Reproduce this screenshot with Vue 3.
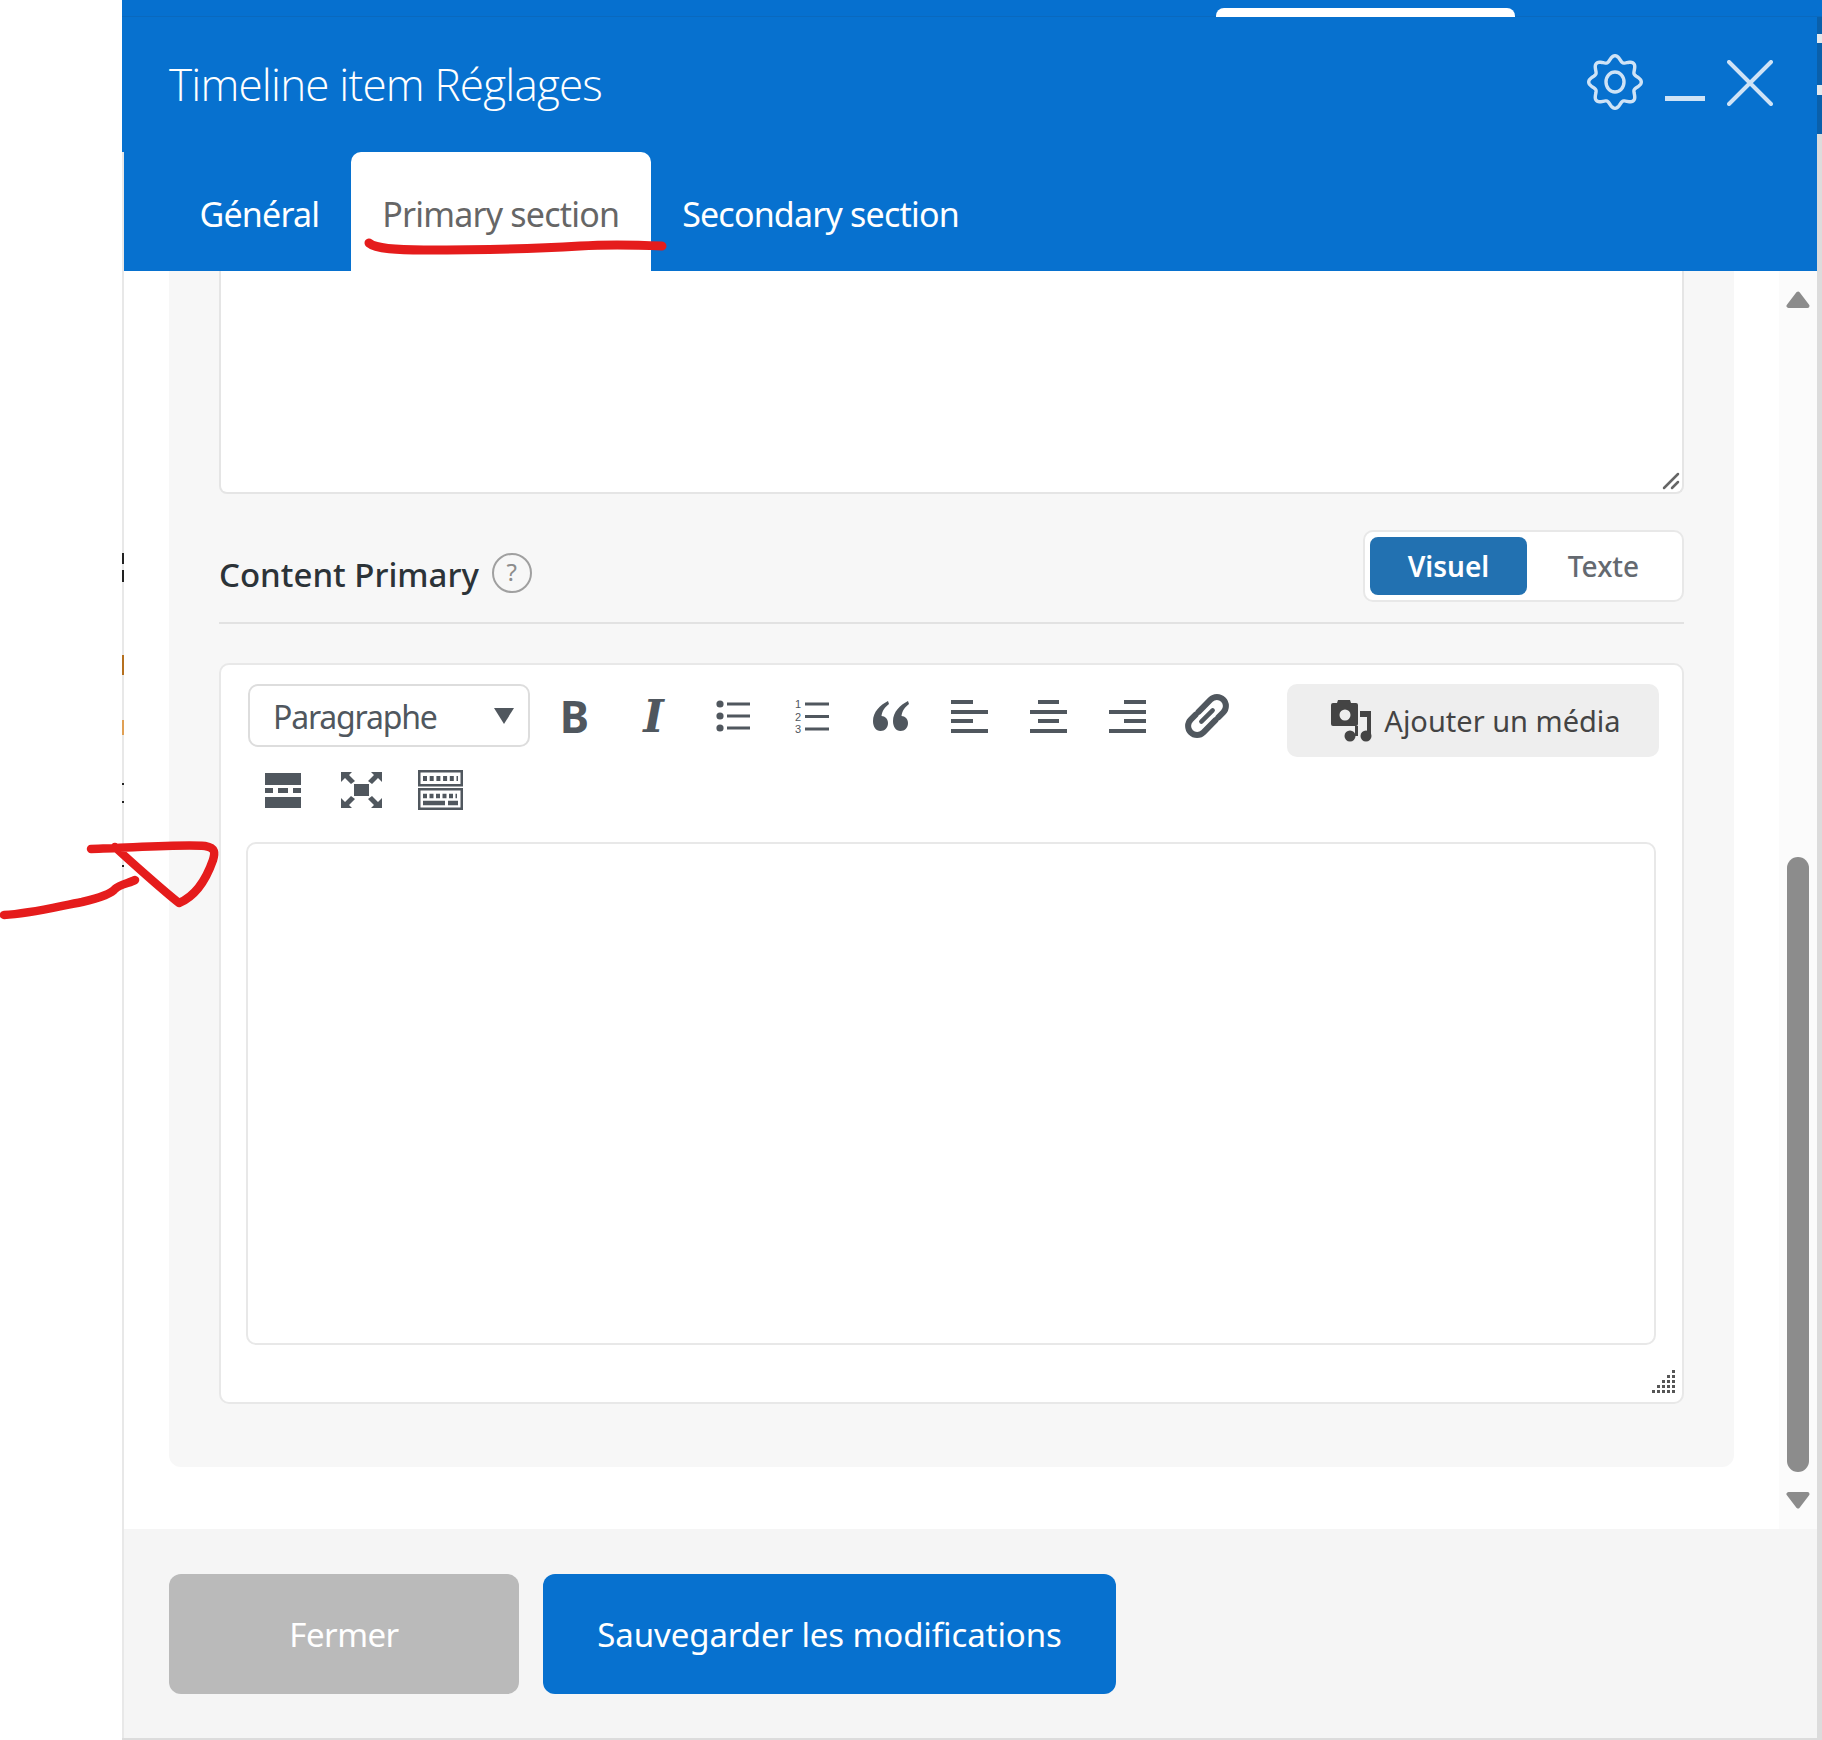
<script setup>
import { computed } from 'vue';

// wavy outline of the settings gear, 8 lobes
const gearPath = computed(() => {
    const pts = [];
    for (let i = 0; i < 160; i++) {
        const a = (i / 160) * Math.PI * 2 - Math.PI / 2;
        const r = 23.5 + 2.8 * Math.cos(8 * (a + Math.PI / 2));
        pts.push(`${(28 + r * Math.cos(a)).toFixed(2)} ${(28 + r * Math.sin(a)).toFixed(2)}`);
    }
    return 'M' + pts.join('L') + 'Z';
});

const resizeDots = [];
for (let row = 0; row < 5; row++) {
    for (let col = 4 - row; col < 5; col++) {
        resizeDots.push({ x: col * 5, y: row * 5 });
    }
}

const edgeMarks = [
    { left: 122, width: 2, top: 553, height: 11, color: '#222' },
    { left: 122, width: 2, top: 570, height: 12, color: '#222' },
    { left: 122, width: 2, top: 655, height: 20, color: '#b5701f' },
    { left: 122, width: 2, top: 720, height: 15, color: '#e0a055' },
    { left: 122, width: 2, top: 783, height: 2, color: '#222' },
    { left: 122, width: 2, top: 801, height: 2, color: '#222' },
    { left: 122, width: 2, top: 865, height: 2, color: '#222' },
    { left: 1817, width: 5, top: 17, height: 117, color: '#0a60ab' },
    { left: 1817, width: 5, top: 34, height: 9, color: '#e4e8ec' },
    { left: 1817, width: 5, top: 85, height: 10, color: '#e4e8ec' },
    { left: 1817, width: 5, top: 134, height: 1606, color: '#dcdcdc' },
];
</script>

<template>
    <div class="page">
        <div class="top-strip">
            <div class="behind-tab"></div>
        </div>
        <div class="modal">
            <header class="modal-head">
                <div class="title-row">
                    <h1>Timeline item Réglages</h1>
                    <div class="head-icons">
                        <svg class="gear" width="56" height="56" viewBox="0 0 56 56" fill="none" stroke="#cfe3f6" stroke-width="3.4">
                            <path :d="gearPath" />
                            <ellipse cx="28" cy="28" rx="9" ry="10" />
                        </svg>
                        <span class="minus"></span>
                        <svg class="close" width="46" height="46" viewBox="0 0 46 46" fill="none" stroke="#cfe3f6" stroke-width="4" stroke-linecap="round">
                            <path d="M2 2L44 44M44 2L2 44" />
                        </svg>
                    </div>
                </div>
                <nav class="tabs">
                    <a class="tab">Général</a>
                    <a class="tab active">Primary section</a>
                    <a class="tab">Secondary section</a>
                </nav>
            </header>

            <div class="modal-body">
                <div class="scroll-area">
                    <section class="panel">
                        <div class="old-textarea">
                            <svg class="corner-grip" width="18" height="18" viewBox="0 0 18 18" fill="none" stroke="#666" stroke-width="2.500" stroke-linecap="round">
                                <path d="M2 16L16 2M10 16L16 10" />
                            </svg>
                        </div>

                        <div class="field-head">
                            <div class="field-label">
                                <span class="label-text">Content Primary</span>
                                <span class="help">?</span>
                            </div>
                            <div class="mode-switch">
                                <button class="mode on">Visuel</button>
                                <button class="mode">Texte</button>
                            </div>
                        </div>

                        <div class="editor">
                            <div class="toolbar">
                                <div class="tool-rows">
                                    <div class="tool-row">
                                        <div class="format-select">
                                            <span>Paragraphe</span>
                                            <i class="caret"></i>
                                        </div>
                                        <button class="tool glyph-b">B</button>
                                        <button class="tool glyph-i">I</button>
                                        <button class="tool">
                                            <svg width="34" height="34" viewBox="0 0 34 34" fill="#50575e">
                                                <circle cx="4" cy="5" r="3.600" /><circle cx="4" cy="17" r="3.600" /><circle cx="4" cy="29" r="3.600" />
                                                <rect x="11" y="3.500" width="23" height="3" /><rect x="11" y="15.500" width="23" height="3" /><rect x="11" y="27.500" width="23" height="3" />
                                            </svg>
                                        </button>
                                        <button class="tool">
                                            <svg width="34" height="39" viewBox="0 0 34 39" fill="#50575e">
                                                <text x="0" y="11" class="num">1</text><text x="0" y="23.500" class="num">2</text><text x="0" y="36" class="num">3</text>
                                                <rect x="10" y="5.500" width="24" height="3" /><rect x="10" y="18" width="24" height="3" /><rect x="10" y="30.500" width="24" height="3" />
                                            </svg>
                                        </button>
                                        <button class="tool">
                                            <svg width="38" height="30" viewBox="0 0 38 30" fill="#50575e">
                                                <path d="M16 0C8 4 1 11 1 20c0 6 3 10 7.500 10S16 26.500 16 22c0-4-3-7-6.500-7C10 10 13 6 17 3z" />
                                                <path d="M36 0c-8 4-15 11-15 20 0 6 3 10 7.500 10S36 26.500 36 22c0-4-3-7-6.500-7C30 10 33 6 37 3z" />
                                            </svg>
                                        </button>
                                        <button class="tool">
                                            <svg width="37" height="34" viewBox="0 0 37 34" fill="#50575e">
                                                <rect x="0" y="1" width="22" height="4" /><rect x="0" y="11" width="37" height="4" /><rect x="0" y="20" width="22" height="4" /><rect x="0" y="30" width="37" height="4" />
                                            </svg>
                                        </button>
                                        <button class="tool">
                                            <svg width="37" height="34" viewBox="0 0 37 34" fill="#50575e">
                                                <rect x="8" y="1" width="21" height="4" /><rect x="0" y="11" width="37" height="4" /><rect x="8" y="20" width="21" height="4" /><rect x="0" y="30" width="37" height="4" />
                                            </svg>
                                        </button>
                                        <button class="tool">
                                            <svg width="37" height="34" viewBox="0 0 37 34" fill="#50575e">
                                                <rect x="15" y="1" width="22" height="4" /><rect x="0" y="11" width="37" height="4" /><rect x="15" y="20" width="22" height="4" /><rect x="0" y="30" width="37" height="4" />
                                            </svg>
                                        </button>
                                        <button class="tool">
                                            <svg width="46" height="46" viewBox="0 0 46 46" fill="none" stroke="#50575e" stroke-width="6" stroke-linecap="round">
                                                <g transform="rotate(-45 23 23)">
                                                    <path d="M20 14H37a9 9 0 0 1 0 18H30" />
                                                    <path d="M26 32H9a9 9 0 0 1 0-18H16" />
                                                    <path d="M15 23H31" stroke-width="4.500" />
                                                </g>
                                            </svg>
                                        </button>
                                    </div>
                                    <div class="tool-row second">
                                        <button class="tool">
                                            <svg width="36" height="35" viewBox="0 0 36 35" fill="#50575e">
                                                <rect x="0" y="0" width="36" height="12" />
                                                <rect x="0" y="15" width="8" height="5" /><rect x="13" y="15" width="10" height="5" /><rect x="28" y="15" width="8" height="5" />
                                                <rect x="0" y="24" width="36" height="11" />
                                            </svg>
                                        </button>
                                        <button class="tool">
                                            <svg width="41" height="36" viewBox="0 0 41 36" fill="#50575e">
                                                <rect x="13" y="12" width="15" height="12" />
                                                <path d="M0 0H11L8 3L14 9L10 12L4 6L0 10Z" />
                                                <path d="M41 0H30L33 3L27 9L31 12L37 6L41 10Z" />
                                                <path d="M0 36H11L8 33L14 27L10 24L4 30L0 26Z" />
                                                <path d="M41 36H30L33 33L27 27L31 24L37 30L41 26Z" />
                                            </svg>
                                        </button>
                                        <button class="tool">
                                            <svg width="45" height="40" viewBox="0 0 45 40" fill="none" stroke="#50575e" stroke-width="2.500">
                                                <rect x="1.250" y="1.250" width="42.500" height="14" />
                                                <rect x="1.250" y="19.250" width="42.500" height="19.500" />
                                                <path d="M5 8.500H40" stroke-width="5" stroke-dasharray="4 2.700" />
                                                <path d="M5 26H39" stroke-width="4.500" stroke-dasharray="4 2.500" />
                                                <path d="M5 33H27M30 33H40" stroke-width="4.500" />
                                            </svg>
                                        </button>
                                    </div>
                                </div>
                                <button class="media-btn">
                                    <svg width="42" height="42" viewBox="0 0 42 42" fill="#444">
                                        <path fill-rule="evenodd" d="M2 3H6L7 0H19L20 3H25Q27 3 27 5V24Q27 26 25 26H2Q0 26 0 24V5Q0 3 2 3ZM14 9.500a5.500 5.500 0 1 0 0 11a5.500 5.500 0 0 0 0-11Z" />
                                        <path d="M29 11H40V36H36V17H29Z" />
                                        <circle cx="35" cy="36" r="5.500" />
                                        <circle cx="19" cy="36" r="5.500" />
                                        <rect x="24" y="26" width="3" height="10" />
                                    </svg>
                                    <span>Ajouter un média</span>
                                </button>
                            </div>
                            <div class="edit-area"></div>
                            <div class="editor-foot">
                                <svg width="25" height="25" viewBox="0 0 25 25" fill="#555">
                                    <rect v-for="(d, i) in resizeDots" :key="i" :x="d.x" :y="d.y" width="3" height="3" />
                                </svg>
                            </div>
                        </div>
                    </section>
                </div>

                <aside class="scrollbar">
                    <svg class="arrow" width="24" height="17" viewBox="0 0 24 17" fill="#8c8c8c" stroke="#8c8c8c" stroke-width="4" stroke-linejoin="round">
                        <path d="M12 2.500L2.500 15H21.500Z" />
                    </svg>
                    <div class="track"><div class="thumb"></div></div>
                    <svg class="arrow" width="24" height="17" viewBox="0 0 24 17" fill="#8c8c8c" stroke="#8c8c8c" stroke-width="4" stroke-linejoin="round">
                        <path d="M12 14.500L2.500 2H21.500Z" />
                    </svg>
                </aside>
            </div>

            <footer class="modal-foot">
                <button class="btn grey">Fermer</button>
                <button class="btn blue">Sauvegarder les modifications</button>
            </footer>
        </div>

        <!-- bits of the page underneath, peeking out at the modal edges -->
        <span v-for="m in edgeMarks" :key="m.top" class="edge-mark" :style="{ left: m.left + 'px', width: m.width + 'px', top: m.top + 'px', height: m.height + 'px', background: m.color }"></span>

        <!-- hand drawn red marks on top of the screenshot -->
        <svg class="scribble" width="1822" height="1740" viewBox="0 0 1822 1740" fill="none" stroke="#e51c1c" stroke-width="8.500" stroke-linecap="round" stroke-linejoin="round">
            <path d="M369 243C376 249 398 250 424 250C480 250 530 249 580 246C610 244 640 245 662 246" stroke-width="9" />
            <path d="M4 915C30 914 60 906 82 902C100 898 112 893 115 889C120 884 130 883 135 880" />
            <path d="M91 849C130 848 180 844 205 846C216 848 215 853 213 860C206 880 196 896 179 903C165 892 130 861 115 847" />
        </svg>
    </div>
</template>

<style scoped>
.page{
    position: relative;
    width: 1822px;
    height: 1740px;
    overflow: hidden;
    background: #fff;
    font-family: "Noto Sans", sans-serif;
}
.top-strip{
    height: 17px;
    margin-left: 122px;
    background: #0670cf;
    border-bottom: 1px solid #0a69be;
    box-sizing: border-box;
    padding-top: 8px;
    padding-left: 1094px;
}
.behind-tab{
    width: 299px;
    height: 9px;
    background: #fff;
    border-radius: 8px 8px 0 0;
}
.modal{
    margin-left: 122px;
    width: 1695px;
    height: 1723px;
    display: flex;
    flex-direction: column;
    border-bottom: 2px solid #dcdcdc;
    box-sizing: border-box;
}
.modal-head{
    background: #0771cf;
    height: 254px;
    display: flex;
    flex-direction: column;
    flex: none;
}
.title-row{
    height: 135px;
    flex: none;
    display: flex;
    justify-content: space-between;
    padding: 0 44px 0 47px;
}
h1{
    margin: 0;
    padding-top: 37px;
    font-family: "Open Sans", sans-serif;
    font-size: 44px;
    line-height: 60px;
    letter-spacing: -0.8px;
    font-weight: 300;
    color: #fff;
}
.head-icons{
    display: flex;
    align-items: flex-start;
}
.gear{
    margin-top: 37px;
}
.minus{
    width: 40px;
    height: 5px;
    margin: 79px 22px 0 22px;
    background: #cfe3f6;
}
.close{
    margin-top: 43px;
}
.tabs{
    display: flex;
    padding-left: 44px;
    flex: 1;
    border-left: 2px solid #e8e8e8;
}
.tab{
    display: block;
    padding: 37px 31.5px 0;
    font-size: 34px;
    line-height: 50px;
    letter-spacing: -0.8px;
    color: #fff;
    border-radius: 10px 10px 0 0;
}
.tab.active{
    background: #fff;
    color: #666;
}
.modal-body{
    flex: 1;
    display: flex;
    min-height: 0;
    background: #fff;
    border-left: 2px solid #e8e8e8;
}
.scroll-area{
    flex: 1;
    padding: 0 45px 62px 45px;
}
.panel{
    height: 100%;
    box-sizing: border-box;
    background: #f7f7f7;
    border-radius: 0 0 12px 12px;
    padding: 0 50px 0 50px;
}
.old-textarea{
    height: 223px;
    box-sizing: border-box;
    background: #fff;
    border: 2px solid #e5e5e5;
    border-top: 0;
    border-radius: 0 0 8px 8px;
    position: relative;
}
.corner-grip{
    position: absolute;
    right: 2px;
    bottom: 2px;
}
.field-head{
    margin-top: 36px;
    height: 94px;
    box-sizing: border-box;
    border-bottom: 2px solid #e2e2e2;
    display: flex;
    justify-content: space-between;
    align-items: flex-start;
}
.field-label{
    display: flex;
    align-items: center;
    gap: 13px;
    margin-top: 16px;
    font-size: 33px;
    line-height: 50px;
    font-weight: 500;
    color: #2c3338;
}
.label-text{
    padding-top: 4px;
}
.help{
    width: 40px;
    height: 40px;
    box-sizing: border-box;
    border: 2px solid #a0a0a0;
    border-radius: 50%;
    font-size: 24px;
    line-height: 34px;
    font-weight: 400;
    text-align: center;
    color: #8c8c8c;
}
.mode-switch{
    display: flex;
    width: 321px;
    height: 72px;
    box-sizing: border-box;
    padding: 5px;
    background: #fff;
    border: 2px solid #e8e8e8;
    border-radius: 10px;
}
.mode{
    flex: 1;
    border: 0;
    background: transparent;
    font-family: inherit;
    font-size: 28px;
    font-weight: 500;
    color: #646970;
    border-radius: 8px;
    padding: 0 0 0 3px;
}
.mode.on{
    flex: none;
    width: 157px;
    background: #2271b1;
    color: #fff;
    font-weight: 600;
    padding: 0;
}
.editor{
    margin-top: 39px;
    height: 741px;
    box-sizing: border-box;
    background: #fff;
    border: 2px solid #e8e8e8;
    border-radius: 10px;
    padding: 19px 26px 0 26px;
    display: flex;
    flex-direction: column;
}
.toolbar{
    display: flex;
    justify-content: space-between;
    align-items: flex-start;
    flex: none;
}
.tool-row{
    display: flex;
    align-items: flex-start;
}
.tool-row.second{
    margin-top: 6px;
}
.format-select{
    width: 282px;
    height: 63px;
    box-sizing: border-box;
    margin-left: 1px;
    margin-right: 5px;
    padding: 2px 14px 0 23px;
    border: 2px solid #ddd;
    border-radius: 10px;
    display: flex;
    align-items: center;
    justify-content: space-between;
    font-size: 32px;
    letter-spacing: -1.2px;
    color: #50575e;
}
.caret{
    width: 0;
    height: 0;
    margin-top: -2px;
    border-left: 10px solid transparent;
    border-right: 10px solid transparent;
    border-top: 16px solid #50575e;
}
.tool{
    width: 79px;
    height: 64px;
    padding: 0;
    border: 0;
    background: transparent;
    display: flex;
    align-items: center;
    justify-content: center;
    color: #50575e;
}
.second .tool{
    height: 72px;
}
.second .tool:first-child{
    margin-left: -4px;
}
.glyph-b{
    font-family: "Noto Sans", sans-serif;
    font-size: 44px;
    font-weight: 700;
}
.glyph-i{
    font-family: "DejaVu Serif", serif;
    font-size: 44px;
    font-weight: 700;
    font-style: italic;
}
.num{
    font-family: "Liberation Sans", sans-serif;
    font-size: 11px;
}
.media-btn{
    width: 372px;
    height: 73px;
    margin-right: -3px;
    border: 0;
    border-radius: 10px;
    background: #eee;
    display: flex;
    align-items: center;
    justify-content: center;
    gap: 11px;
    font-family: inherit;
    font-size: 29px;
    color: #444;
    padding: 0 0 0 6px;
}
.edit-area{
    margin-top: 16px;
    margin-right: 0;
    margin-left: -1px;
    height: 503px;
    flex: none;
    box-sizing: border-box;
    background: #fff;
    border: 2px solid #e8e8e8;
    border-radius: 10px;
}
.editor-foot{
    display: flex;
    justify-content: flex-end;
    margin-top: 25px;
    margin-right: -21px;
}
.scrollbar{
    width: 38px;
    flex: none;
    background: #fbfbfb;
    display: flex;
    flex-direction: column;
    align-items: center;
}
.arrow{
    flex: none;
    margin: 20px 0;
}
.track{
    flex: 1;
    display: flex;
    align-items: flex-end;
}
.thumb{
    width: 22px;
    height: 615px;
    background: #8c8c8c;
    border-radius: 11px;
}
.modal-foot{
    height: 209px;
    flex: none;
    box-sizing: border-box;
    background: #f5f5f5;
    border-left: 2px solid #e8e8e8;
    padding: 45px 45px;
    display: flex;
    gap: 24px;
    align-items: flex-start;
}
.btn{
    height: 120px;
    border: 0;
    border-radius: 12px;
    color: #fff;
    font-family: inherit;
    font-size: 33px;
    letter-spacing: -0.1px;
    padding: 0;
}
.btn.grey{
    width: 350px;
    background: #bababa;
    letter-spacing: -0.5px;
}
.btn.blue{
    width: 573px;
    background: #0771cf;
}
.edge-mark{
    position: absolute;
}
.scribble{
    position: absolute;
    left: 0;
    top: 0;
    pointer-events: none;
}
</style>
